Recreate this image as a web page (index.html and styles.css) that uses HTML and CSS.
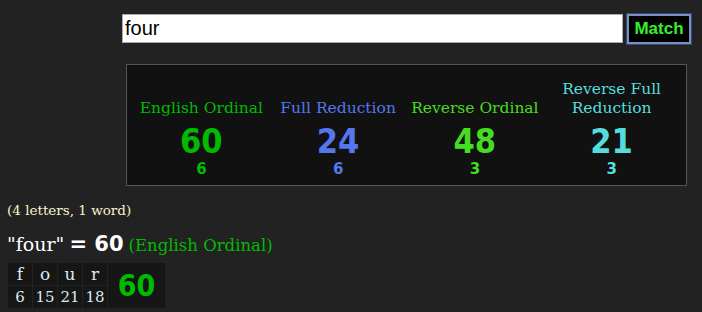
FILE: index.html
```html
<!DOCTYPE html>
<html>
<head>
<meta charset="utf-8">
<link rel="stylesheet" href="styles.css">
</head>
<body>
<div class="search">
  <input class="query" type="text" value="four">
  <button class="match">Match</button>
</div>
<div class="panel">
  <div class="col c1">
    <div class="label">English Ordinal</div>
    <div class="num">60</div>
    <div class="red">6</div>
  </div>
  <div class="col c2">
    <div class="label">Full Reduction</div>
    <div class="num">24</div>
    <div class="red">6</div>
  </div>
  <div class="col c3">
    <div class="label">Reverse Ordinal</div>
    <div class="num">48</div>
    <div class="red">3</div>
  </div>
  <div class="col c4">
    <div class="label">Reverse Full<br>Reduction</div>
    <div class="num">21</div>
    <div class="red">3</div>
  </div>
</div>
<div class="count">(4 letters, 1 word)</div>
<div class="result"><span class="word">"four"</span> <span class="eq">= 60</span> <span class="cipher">(English Ordinal)</span></div>
<table class="breakdown">
  <tr class="letters"><td>f</td><td>o</td><td>u</td><td>r</td><td class="total" rowspan="2">60</td></tr>
  <tr class="values"><td>6</td><td>15</td><td>21</td><td>18</td></tr>
</table>
</body>
</html>
```
FILE: styles.css
```css
html, body {
  margin: 0;
  background: #222222;
}
body {
  padding: 14px 7px 0 7px;
  font-family: "DejaVu Serif", serif;
  color: #ffffff;
}
.search {
  display: flex;
  align-items: flex-start;
  margin-left: 115px;
  gap: 4px;
}
.query {
  width: 501px;
  height: 29px;
  box-sizing: border-box;
  border: 1px solid #a9a9a9;
  padding: 0 2px;
  margin: 0;
  font-family: "Liberation Sans", Arial, sans-serif;
  font-size: 20px;
  color: #000;
  background: #fff;
  outline: none;
}
.match {
  width: 64px;
  height: 30px;
  box-sizing: border-box;
  margin: 0;
  padding: 0;
  background: #000;
  border: 2px solid #7890c8;
  outline: 1px solid #3a4a6a;
  color: #33ee33;
  font-family: "Liberation Sans", Arial, sans-serif;
  font-weight: bold;
  font-size: 17px;
}
.panel {
  margin: 20px 0 0 119px;
  width: 561px;
  height: 122px;
  box-sizing: border-box;
  border: 1px solid #555555;
  background: #111111;
  padding: 15px 6px 0 6px;
  display: grid;
  grid-template-columns: repeat(4, 1fr);
}
.col {
  display: flex;
  flex-direction: column;
  align-items: center;
  text-align: center;
}
.label {
  height: 38px;
  display: flex;
  align-items: flex-end;
  justify-content: center;
  font-size: 15.5px;
  line-height: 19px;
  white-space: nowrap;
}
.num {
  margin-top: 5px;
  font-family: "DejaVu Sans Condensed", "DejaVu Sans", Verdana, sans-serif;
  font-stretch: semi-condensed;
  font-weight: bold;
  font-size: 34px;
  line-height: 36px;
}
.red {
  margin-top: 1px;
  font-family: "DejaVu Sans", Verdana, sans-serif;
  font-weight: bold;
  font-size: 15px;
  line-height: 18px;
}
.c1 { color: #00bb00; }
.c2 { color: #5577ee; }
.c3 { color: #44dd22; }
.c4 { color: #55dddd; }
.count {
  margin-top: 15px;
  color: #f8f4c8;
  font-size: 13.5px;
  line-height: 18px;
}
.result {
  margin-top: 13px;
  line-height: 24px;
  white-space: nowrap;
}
.word {
  font-size: 19px;
}
.eq {
  font-family: "DejaVu Sans", Verdana, sans-serif;
  font-weight: bold;
  font-size: 21px;
}
.cipher {
  color: #00bb00;
  font-size: 16.5px;
}
.breakdown {
  margin-top: 4px;
  border-collapse: collapse;
  background: #161616;
}
.breakdown td {
  border: 1px solid #222222;
  padding: 0;
  text-align: center;
  color: #dde8f0;
}
.letters td {
  width: 24px;
  height: 22px;
  font-size: 17px;
  line-height: 22px;
}
.values td {
  height: 22px;
  font-size: 15px;
  line-height: 22px;
}
.breakdown td.total {
  width: 57px;
  color: #00bb00;
  font-family: "DejaVu Sans Condensed", "DejaVu Sans", Verdana, sans-serif;
  font-stretch: semi-condensed;
  font-weight: bold;
  font-size: 30px;
}
```
